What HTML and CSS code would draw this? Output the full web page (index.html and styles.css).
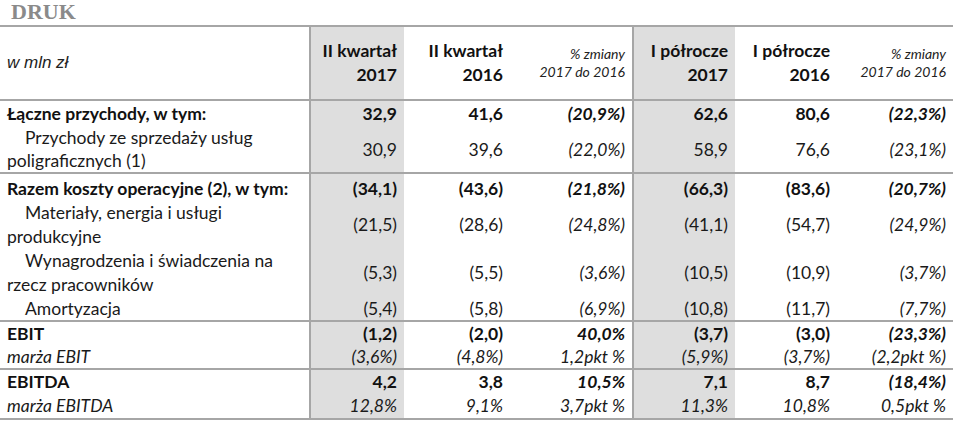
FILE: index.html
```html
<!DOCTYPE html>
<html lang="pl">
<head>
<meta charset="utf-8">
<title>DRUK</title>
<link rel="stylesheet" href="styles.css">
</head>
<body>
<h1 class="title">DRUK</h1>
<table class="fin">
  <colgroup>
    <col class="c-label">
    <col class="c-q17">
    <col class="c-q16">
    <col class="c-qch">
    <col class="c-h17">
    <col class="c-h16">
    <col class="c-hch">
  </colgroup>
  <thead>
    <tr class="head">
      <th class="label unit sepr">w mln zł</th>
      <th class="num shade">II kwartał<br>2017</th>
      <th class="num">II kwartał<br>2016</th>
      <th class="num chg sepr">% zmiany<br>2017 do 2016</th>
      <th class="num shade">I półrocze<br>2017</th>
      <th class="num">I półrocze<br>2016</th>
      <th class="num chg">% zmiany<br>2017 do 2016</th>
    </tr>
  </thead>
  <tbody>
    <tr class="r-first1 bold">
      <td class="label sepr">Łączne przychody, w tym:</td>
      <td class="num shade">32,9</td>
      <td class="num">41,6</td>
      <td class="num it sepr">(20,9%)</td>
      <td class="num shade">62,6</td>
      <td class="num">80,6</td>
      <td class="num it">(22,3%)</td>
    </tr>
    <tr class="r-two23 end">
      <td class="label sub sepr">Przychody ze sprzedaży usług<br>poligraficznych (1)</td>
      <td class="num shade">30,9</td>
      <td class="num">39,6</td>
      <td class="num it sepr">(22,0%)</td>
      <td class="num shade">58,9</td>
      <td class="num">76,6</td>
      <td class="num it">(23,1%)</td>
    </tr>
    <tr class="r-first2 bold">
      <td class="label sepr">Razem koszty operacyjne (2), w tym:</td>
      <td class="num shade">(34,1)</td>
      <td class="num">(43,6)</td>
      <td class="num it sepr">(21,8%)</td>
      <td class="num shade">(66,3)</td>
      <td class="num">(83,6)</td>
      <td class="num it">(20,7%)</td>
    </tr>
    <tr class="r-two24">
      <td class="label sub sepr">Materiały, energia i usługi<br>produkcyjne</td>
      <td class="num shade">(21,5)</td>
      <td class="num">(28,6)</td>
      <td class="num it sepr">(24,8%)</td>
      <td class="num shade">(41,1)</td>
      <td class="num">(54,7)</td>
      <td class="num it">(24,9%)</td>
    </tr>
    <tr class="r-two24">
      <td class="label sub sepr">Wynagrodzenia i świadczenia na<br>rzecz pracowników</td>
      <td class="num shade">(5,3)</td>
      <td class="num">(5,5)</td>
      <td class="num it sepr">(3,6%)</td>
      <td class="num shade">(10,5)</td>
      <td class="num">(10,9)</td>
      <td class="num it">(3,7%)</td>
    </tr>
    <tr class="r-one23 end">
      <td class="label sub sepr">Amortyzacja</td>
      <td class="num shade">(5,4)</td>
      <td class="num">(5,8)</td>
      <td class="num it sepr">(6,9%)</td>
      <td class="num shade">(10,8)</td>
      <td class="num">(11,7)</td>
      <td class="num it">(7,7%)</td>
    </tr>
    <tr class="r-one24 bold">
      <td class="label sepr">EBIT</td>
      <td class="num shade">(1,2)</td>
      <td class="num">(2,0)</td>
      <td class="num it sepr">40,0%</td>
      <td class="num shade">(3,7)</td>
      <td class="num">(3,0)</td>
      <td class="num it">(23,3%)</td>
    </tr>
    <tr class="r-one22 end italic">
      <td class="label sepr">marża EBIT</td>
      <td class="num shade">(3,6%)</td>
      <td class="num">(4,8%)</td>
      <td class="num sepr">1,2pkt %</td>
      <td class="num shade">(5,9%)</td>
      <td class="num">(3,7%)</td>
      <td class="num">(2,2pkt %)</td>
    </tr>
    <tr class="r-one24 bold">
      <td class="label sepr">EBITDA</td>
      <td class="num shade">4,2</td>
      <td class="num">3,8</td>
      <td class="num it sepr">10,5%</td>
      <td class="num shade">7,1</td>
      <td class="num">8,7</td>
      <td class="num it">(18,4%)</td>
    </tr>
    <tr class="r-one24 end italic">
      <td class="label sepr">marża EBITDA</td>
      <td class="num shade">12,8%</td>
      <td class="num">9,1%</td>
      <td class="num sepr">3,7pkt %</td>
      <td class="num shade">11,3%</td>
      <td class="num">10,8%</td>
      <td class="num">0,5pkt %</td>
    </tr>
  </tbody>
</table>
</body>
</html>
```
FILE: styles.css
```css
html, body {
  margin: 0;
  padding: 0;
  background: #ffffff;
}

.title {
  margin: 0;
  padding-left: 11px;
  height: 25px;
  font-family: "Liberation Serif", "DejaVu Serif", serif;
  font-weight: bold;
  font-size: 22px;
  line-height: 23px;
  color: #8a8a8a;
}

.fin {
  width: 953px;
  table-layout: fixed;
  border-collapse: separate;
  border-spacing: 0;
  font-family: Lato, "Open Sans", sans-serif;
  font-size: 17.5px;
  color: #1a1a1a;
}

.c-label { width: 311px; }
.c-q17 { width: 93px; }
.c-q16 { width: 106px; }
.c-qch { width: 124px; }
.c-h17 { width: 101px; }
.c-h16 { width: 102px; }
.c-hch { width: 116px; }

.fin th,
.fin td {
  padding: 0 7px;
  white-space: nowrap;
  vertical-align: middle;
  overflow: hidden;
}

.label { text-align: left; padding-left: 7px; }
.num { text-align: right; }

.shade { background: #dedede; }
.sepr { border-right: 2px solid #a6a6a6; }

/* header */
.head th {
  border-top: 2px solid #a6a6a6;
  border-bottom: 2px solid #a6a6a6;
  padding-top: 12px;
  padding-bottom: 12px;
  font-weight: bold;
  line-height: 24px;
  color: #111;
}
.head th.unit {
  font-family: "Liberation Sans", Arial, sans-serif;
  font-weight: normal;
  font-style: italic;
  font-size: 17px;
  color: #222;
}
.head th.chg {
  font-weight: normal;
  font-style: italic;
  font-size: 14px;
  line-height: 18px;
  color: #222;
}

/* rows */
.bold td { font-weight: bold; color: #111; }
.italic td { font-style: italic; }
.it { font-style: italic; }

.sub { text-indent: 18px; }

.r-first1 td { padding-top: 1px; line-height: 24px; }
.r-first2 td { padding-top: 3px; line-height: 24px; }
.r-two23 td { line-height: 23px; }
.r-two24 td { line-height: 24px; }
.r-one23 td { line-height: 23px; }
.r-one24 td { line-height: 24px; }
.r-one22 td { line-height: 22px; }

.end td { border-bottom: 2px solid #a6a6a6; }
```
